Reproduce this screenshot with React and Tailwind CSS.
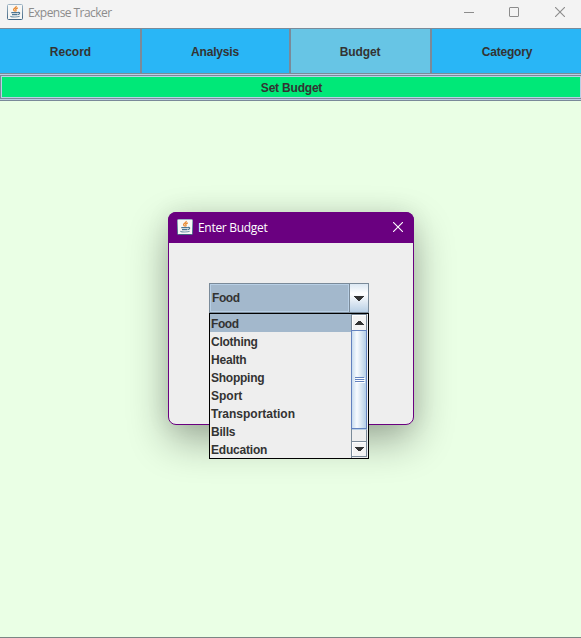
import React from 'react';

const tabs = [
  { name: 'Record', box: 'w-[140px] pl-px bg-[#29b6f6]' },
  { name: 'Analysis', box: 'w-[149px] border-l-2 pr-px bg-[#29b6f6] tracking-[-0.2px]' },
  { name: 'Budget', box: 'w-[141px] border-l-2 pr-px bg-[#67c5e5] tracking-[-0.1px]' },
  { name: 'Category', box: 'w-[154px] border-l-2 pr-[2px] bg-[#29b6f6] tracking-[-0.2px]' },
];

const options = [
  { name: 'Food', style: 'bg-[#a3b8cc] tracking-[-0.4px]' },
  { name: 'Clothing', style: 'tracking-[-0.25px]' },
  { name: 'Health', style: 'tracking-[-0.2px]' },
  { name: 'Shopping', style: 'tracking-[-0.25px]' },
  { name: 'Sport', style: '' },
  { name: 'Transportation', style: '' },
  { name: 'Bills', style: 'tracking-[-0.2px]' },
  { name: 'Education', style: 'tracking-[-0.2px]' },
];

function JavaIcon() {
  return (
    <svg width="16" height="16" viewBox="0 0 16 16" fill="none" className="shrink-0">
      <defs>
        <linearGradient id="cup" x1="0" y1="0" x2="0" y2="1">
          <stop offset="0" stopColor="#9db4c5" />
          <stop offset="1" stopColor="#416583" />
        </linearGradient>
      </defs>
      <rect x=".5" y=".5" width="15" height="15" rx="1" fill="#f7f7f5" stroke="url(#cup)" />
      <path d="M9.2 2c.5 1.6-3 2.2-2.6 3.8.2.7 1 1 1 1.7M10.8 3.9c-1.7.6-2.4 1.2-1.9 2 .4.6.2 1-.4 1.6" stroke="#e9882e" strokeWidth="1.3" />
      <path d="M4.3 8.7h6.4M5 10.7h5.2M10.8 8.5c2.7-.5 2.3 1.7-.1 2.2" stroke="#4b7592" strokeWidth="1.2" />
      <path d="M3.3 12.2c1.5 1 7.5 1 9.3 0" stroke="#7899ad" strokeWidth="1.1" />
    </svg>
  );
}

function Triangle({ up = false, big = false }) {
  return (
    <svg width={big ? 10 : 9} height={big ? 5 : 4} viewBox="0 0 10 5" preserveAspectRatio="none" shapeRendering="crispEdges">
      <path d={up ? 'M0 5H10L6 0H4Z' : 'M0 0H10L6 5H4Z'} fill="#333" />
    </svg>
  );
}

function Close() {
  return (
    <svg width="10" height="10" viewBox="0 0 10 10" fill="none" stroke="currentColor" strokeWidth="1.1">
      <path d="M0 0 10 10M10 0 0 10" />
    </svg>
  );
}

function ScrollBar() {
  return (
    <div className="flex h-[144px] w-[17px] flex-col border-l border-[#7a8a99] bg-[#eee]">
      <div className="flex h-4 w-[15px] items-center justify-center border-t border-r border-t-[#7a8a99] border-r-[#7a8a99] bg-[#f3f3f3] shadow-[inset_1px_1px_#fff]">
        <Triangle up />
      </div>
      <div className="-ml-px flex h-[99px] w-4 flex-col items-center justify-center gap-px border border-[#6382bf] bg-linear-to-r from-[#c8dcef] via-[#f8fbfe] via-35% to-[#b4cee7]">
        {[0, 1, 2].map((i) => (
          <div key={i} className="h-px w-[9px] bg-[#6382bf] shadow-[1px_1px_#fff]" />
        ))}
      </div>
      <div className="h-3 w-[15px] border-t border-r border-t-[#b8cfe5] border-r-[#7a8a99] bg-[#eee]" />
      <div className="flex h-4 w-[15px] items-center justify-center border-y border-r border-[#7a8a99] bg-[#f3f3f3] shadow-[inset_1px_1px_#fff]">
        <Triangle />
      </div>
    </div>
  );
}

function BudgetDialog() {
  return (
    <div className="absolute top-[212px] left-[168px] h-[213px] w-[246px] rounded-[8px] border border-[#6a0080] bg-[#eee] shadow-[0_16px_40px_rgba(0,0,0,0.32),0_0_24px_rgba(0,0,0,0.08)]">
      <header className="-mx-px -mt-px flex h-[31px] items-center rounded-t-[8px] bg-[#6a0080] pr-[11px] pl-[9px] text-white">
        <div className="-mt-0.5">
          <JavaIcon />
        </div>
        <span className="ml-[5px] flex-1 font-['Open_Sans','Noto_Sans',sans-serif] text-[12px] font-normal tracking-[-0.3px]">Enter Budget</span>
        <div className="-mt-px">
          <Close />
        </div>
      </header>
      <div className="mt-10 ml-10 w-[160px] text-[#333]">
        <div className="flex h-[30px] border border-[#7a8a99]">
          <div className="flex flex-1 items-center border border-[#b8cfe5] bg-[#a3b8cc] pl-px tracking-[-0.4px]">Food</div>
          <div className="flex w-[19px] items-center justify-center border-l border-[#7a8a99] bg-linear-to-b from-[#dce8f3] via-white via-35% to-[#b8cfe5]">
            <Triangle big />
          </div>
        </div>
        <div className="flex h-[146px] border border-black bg-[#eee]">
          <ul className="flex-1">
            {options.map((option) => (
              <li key={option.name} className={`h-[18px] pl-px leading-[21px] ${option.style}`}>
                {option.name}
              </li>
            ))}
          </ul>
          <ScrollBar />
        </div>
      </div>
    </div>
  );
}

export default function App() {
  return (
    <div className="relative flex h-[638px] w-[581px] flex-col overflow-hidden border-b border-[#7b8684] bg-[#eaffe5] font-['Liberation_Sans',Arial,sans-serif] text-[12px] font-bold text-[#333]">
      <header className="flex h-7 shrink-0 items-center bg-[#f3f3f3] pr-4 pb-[3px] pl-[7px] font-normal text-[#8c8c8c]">
        <div className="-mt-0.5">
          <JavaIcon />
        </div>
        <span className="ml-[5px] flex-1 pt-px font-['Open_Sans','Noto_Sans',sans-serif] text-[12px] tracking-[-0.55px]">Expense Tracker</span>
        <div className="-mt-px flex items-center gap-[35px]">
          <div className="mr-px h-px w-[10px] bg-[#8c8c8c]" />
          <div className="mr-px -ml-px h-[10px] w-[10px] rounded-[1px] border border-[#8c8c8c]" />
          <Close />
        </div>
      </header>
      <nav className="flex h-[46px] shrink-0 border-y border-[#7a8a99]">
        {tabs.map((tab) => (
          <div key={tab.name} className={`flex shrink-0 items-center justify-center border-[#7a8a99] pt-[2px] ${tab.box}`}>
            {tab.name}
          </div>
        ))}
      </nav>
      <div className="h-[27px] shrink-0 border-b border-[#7a8a99] bg-[#b8cfe5] py-px">
        <div className="h-6 border-y border-l border-[#7a8a99] bg-[#b8cfe5]">
          <div className="flex h-[22px] items-center justify-center border border-[#b8cfe5] bg-[#00e878] pt-[2px] pl-px tracking-[-0.2px]">Set Budget</div>
        </div>
      </div>
      <BudgetDialog />
    </div>
  );
}
